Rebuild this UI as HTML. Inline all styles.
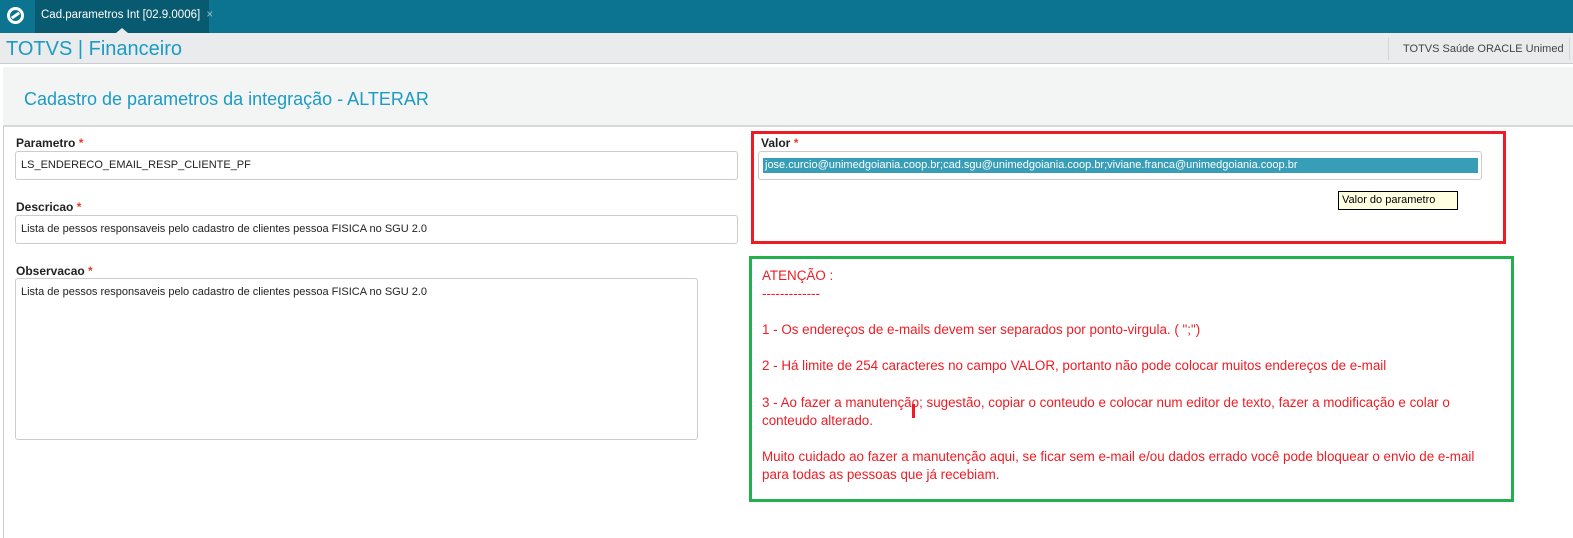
<!DOCTYPE html>
<html><head><meta charset="utf-8"><style>
*{margin:0;padding:0;box-sizing:border-box}
body{width:1573px;height:538px;overflow:hidden;background:#fff;font-family:"Liberation Sans",Arial,sans-serif;position:relative}
.abs{position:absolute}
.top{left:0;top:0;width:1573px;height:33px;background:#0c7490}
.tab{left:35px;top:0;width:174px;height:33px;background:#075a70;color:#fff;font-size:11.5px;line-height:31px;padding-left:6px;white-space:nowrap}
.hdr{left:0;top:33px;width:1573px;height:31px;background:#e9ebed;border-bottom:1px solid #c9cdd1}
.lbl{font-size:12px;font-weight:bold;color:#222}
.lbl b{color:#e53a2a}
.inp{border:1px solid #ccc;border-radius:3px;background:#fff;font-size:11px;color:#222;padding-left:5px}
.g{color:#ee1c24;font-size:13.4px;line-height:18.1px;font-family:"Liberation Sans",sans-serif}
</style></head><body>
<div class="abs top"></div>
<div class="abs" style="left:7px;top:7px;width:17px;height:17px;border:3px solid #fff;border-radius:50%"></div>
<div class="abs" style="left:11px;top:14px;width:9px;height:3px;background:#fff;transform:rotate(-35deg)"></div>
<div class="abs tab">Cad.parametros Int [02.9.0006] <span style="color:#9fc0cc;margin-left:3px">×</span></div>
<div class="abs" style="left:116px;top:28px;width:0;height:0;border-left:6px solid transparent;border-right:6px solid transparent;border-bottom:5px solid #e9ebed"></div>
<div class="abs hdr"></div>
<div class="abs" style="left:6px;top:38px;font-size:20px;color:#1b9bc5">TOTVS | Financeiro</div>
<div class="abs" style="left:1388px;top:38px;width:1px;height:22px;background:#d4d7da"></div>
<div class="abs" style="left:1403px;top:43px;font-size:11px;color:#444">TOTVS Saúde ORACLE Unimed</div>
<div class="abs" style="left:1569px;top:38px;width:1px;height:22px;background:#d4d7da"></div>
<div class="abs" style="left:3px;top:67px;width:1570px;height:60px;background:#f3f4f4;border-bottom:2px solid #d6d8da"></div>
<div class="abs" style="left:24px;top:89px;font-size:18px;color:#1b9bc5">Cadastro de parametros da integração - ALTERAR</div>
<div class="abs" style="left:3px;top:127px;width:1px;height:411px;background:#ccc"></div>

<div class="abs lbl" style="left:16px;top:136px">Parametro <b>*</b></div>
<div class="abs inp" style="left:15px;top:151px;width:723px;height:29px;line-height:27px">LS_ENDERECO_EMAIL_RESP_CLIENTE_PF</div>
<div class="abs lbl" style="left:16px;top:200px">Descricao <b>*</b></div>
<div class="abs inp" style="left:15px;top:215px;width:723px;height:29px;line-height:27px">Lista de pessos responsaveis pelo cadastro de clientes pessoa FISICA no SGU 2.0</div>
<div class="abs lbl" style="left:16px;top:264px">Observacao <b>*</b></div>
<div class="abs inp" style="left:15px;top:278px;width:683px;height:162px;padding-top:7px">Lista de pessos responsaveis pelo cadastro de clientes pessoa FISICA no SGU 2.0</div>

<div class="abs" style="left:751px;top:131px;width:755px;height:113px;border:3px solid #ed1c24"></div>
<div class="abs lbl" style="left:761px;top:136px">Valor <b>*</b></div>
<div class="abs inp" style="left:758px;top:151px;width:724px;height:29px"></div>
<div class="abs" style="left:763px;top:158px;width:715px;height:15px;background:#389db6;color:#fff;font-size:11px;line-height:15px;padding-left:2px;white-space:nowrap;overflow:hidden">jose.curcio@unimedgoiania.coop.br;cad.sgu@unimedgoiania.coop.br;viviane.franca@unimedgoiania.coop.br</div>
<div class="abs" style="left:1338px;top:191px;width:120px;height:19px;border:1px solid #000;background:#ffffe1;font-size:11px;line-height:17px;padding-left:3px;color:#000">Valor do parametro</div>

<div class="abs" style="left:749px;top:256px;width:765px;height:246px;border:3px solid #22b14c"></div>
<div class="abs g" style="left:762px;top:267px;width:735px">ATENÇÃO :<br>-------------<br><br>1 - Os endereços de e-mails devem ser separados por ponto-virgula. ( ";")<br><br>2 - Há limite de 254 caracteres no campo VALOR, portanto não pode colocar muitos endereços de e-mail<br><br>3 - Ao fazer a manutenção; sugestão, copiar o conteudo e colocar num editor de texto, fazer a modificação e colar o conteudo alterado.<br><br>Muito cuidado ao fazer a manutenção aqui, se ficar sem e-mail e/ou dados errado você pode bloquear o envio de e-mail para todas as pessoas que já recebiam.</div>
<div class="abs" style="left:912px;top:404px;width:3px;height:14px;background:#ed1c24"></div>
</body></html>
